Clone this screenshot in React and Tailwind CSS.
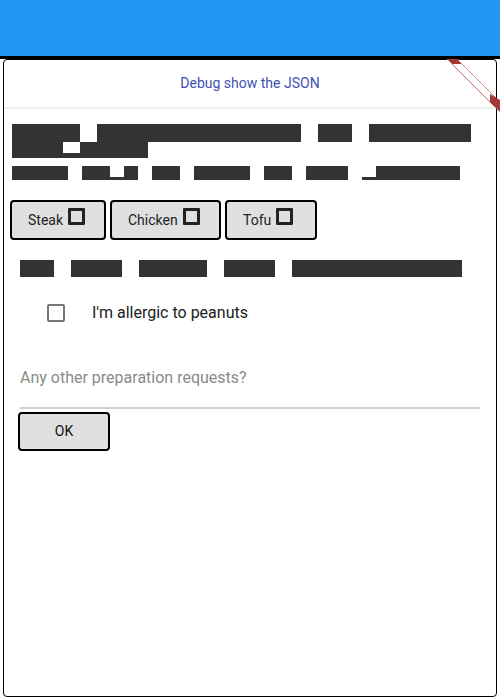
import React from 'react';

const Block = ({ w, h, className = '' }) => (
  <div className={`bg-[#333333] shrink-0 ${className}`} style={{ width: w, height: h }} />
);

// block with a white notch on its top edge
const Notched = ({ w, h, left, notchW, notchH }) => (
  <div className="flex shrink-0" style={{ width: w, height: h }}>
    {left > 0 && <div className="bg-[#333333]" style={{ width: left, height: h }} />}
    <div className="flex flex-col" style={{ width: notchW }}>
      <div className="bg-white" style={{ height: notchH }} />
      <div className="bg-[#333333] flex-1" />
    </div>
    <div className="bg-[#333333] flex-1" />
  </div>
);

const ChipButton = ({ label, width }) => (
  <button
    className="h-[40px] flex items-center pl-[16px] bg-[#e0e0e0] border-2 border-black rounded-[4px] text-[14px] text-[#222]"
    style={{ width }}
  >
    <span>{label}</span>
    <span className="ml-[5px] mb-[8px] w-[17px] h-[17px] border-[3px] border-[#222] rounded-[1px] bg-transparent" />
  </button>
);

const DebugBanner = () => (
  <svg className="absolute top-0 right-0 pointer-events-none" width="60" height="120" viewBox="440 0 60 120">
    <polygon points="447,59 457,59 500,102 500,112" fill="#fff" />
    <line x1="452" y1="64" x2="495" y2="107" stroke="#c96a6a" strokeWidth="1" />
    <line x1="462" y1="64" x2="500" y2="102" stroke="#d99090" strokeWidth="1" />
    <polygon points="447,59 457,59 462,64 452,64" fill="#a33a3a" />
    <polygon points="490,94 500,100 500,112 490,102" fill="#a33a3a" />
  </svg>
);

export default function App() {
  return (
    <div className="relative w-[500px] h-[700px] bg-white overflow-hidden" style={{ fontFamily: 'Roboto, "Liberation Sans", sans-serif' }}>
      <div className="h-[56px] bg-[#2196f3]" />
      <div className="h-[3px] bg-black" />

      <div className="mx-[3px] h-[638px] border border-black rounded-[4px] flex flex-col">
        {/* header */}
        <div className="h-[47px] flex items-center justify-center text-[14px] text-[#3f51b5]">
          Debug show the JSON
        </div>
        <div className="h-[2px] bg-[#eeeeee]" />

        {/* redacted text, first paragraph */}
        <div className="mt-[15px] pl-[8px]">
          <div className="flex gap-[17px]">
            <Block w={68} h={18} />
            <Block w={204} h={18} />
            <Block w={34} h={18} />
            <Block w={102} h={18} />
          </div>
          <Notched w={136} h={16} left={51} notchW={17} notchH={11} />
        </div>

        <div className="mt-[8px] pl-[8px] flex gap-[14px]">
          <Block w={56} h={14} />
          <Notched w={56} h={14} left={28} notchW={14} notchH={11} />
          <Block w={28} h={14} />
          <Block w={56} h={14} />
          <Block w={28} h={14} />
          <Block w={42} h={14} />
          <Notched w={98} h={14} left={0} notchW={14} notchH={11} />
        </div>

        {/* protein choice */}
        <div className="mt-[20px] ml-[6px] flex gap-[4px]">
          <ChipButton label="Steak" width={96} />
          <ChipButton label="Chicken" width={111} />
          <ChipButton label="Tofu" width={92} />
        </div>

        <div className="mt-[20px] ml-[16px] flex gap-[17px]">
          <Block w={34} h={17} />
          <Block w={51} h={17} />
          <Block w={68} h={17} />
          <Block w={51} h={17} />
          <Block w={170} h={17} />
        </div>

        {/* allergy */}
        <div className="mt-[27px] ml-[43px] flex items-center h-[18px]">
          <div className="w-[18px] h-[18px] border-2 border-[#757575] rounded-[2px]" />
          <span className="ml-[27px] text-[16px] text-[#212121]">I'm allergic to peanuts</span>
        </div>

        {/* text field */}
        <div className="mt-[44px] ml-[16px] w-[460px]">
          <div className="h-[24px] leading-[24px] text-[16px] text-[#8a8a8a]">Any other preparation requests?</div>
          <div className="mt-[17px] h-[2px] bg-[#cfcfcf]" />
        </div>

        <button className="mt-[3px] ml-[14px] w-[92px] h-[39px] bg-[#e0e0e0] border-2 border-black rounded-[4px] text-[14px] text-[#111] flex items-center justify-center">
          OK
        </button>
      </div>

      <DebugBanner />
    </div>
  );
}
